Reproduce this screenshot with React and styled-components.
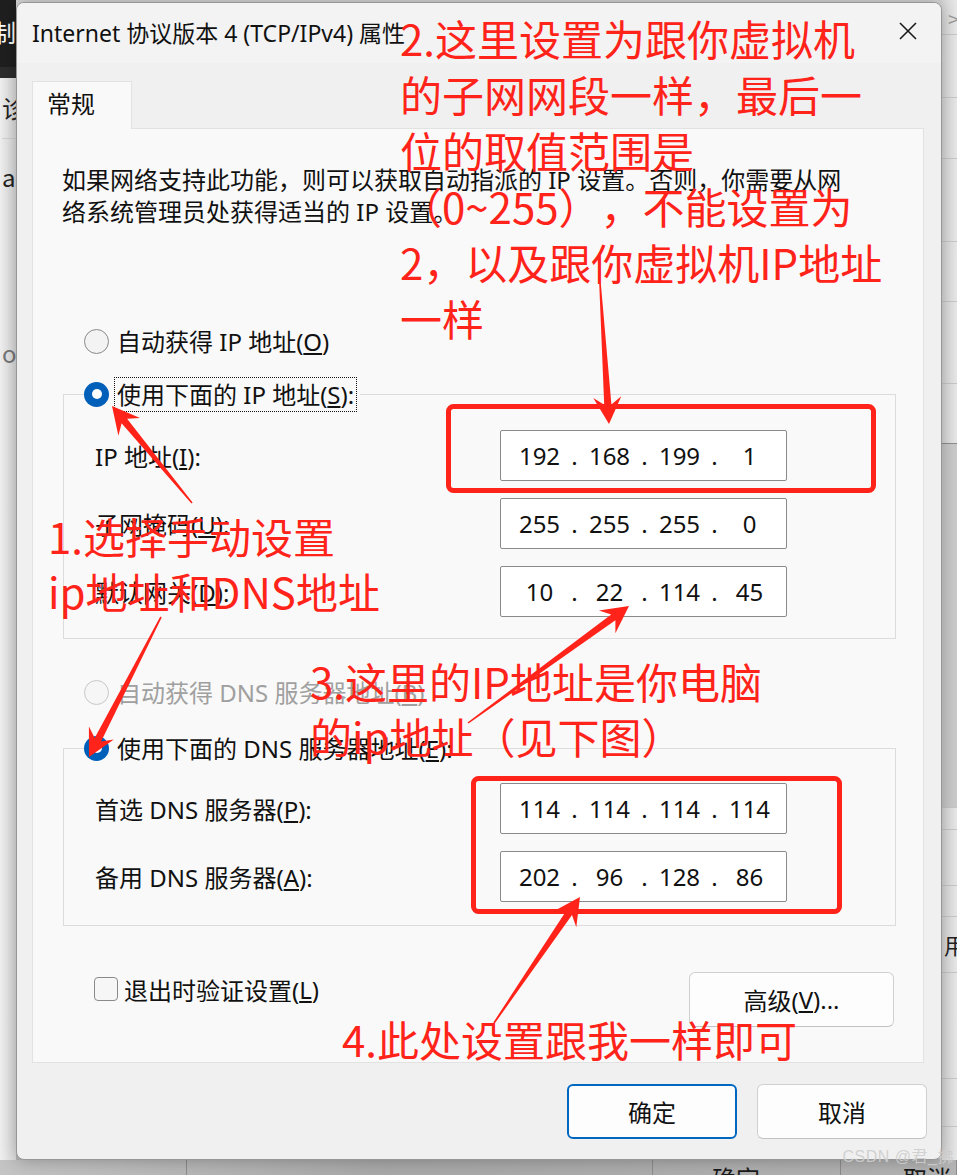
import React from 'react';
import styled, { createGlobalStyle } from 'styled-components';

const GlobalStyle = createGlobalStyle`
  html, body {
    margin: 0;
    padding: 0;
    background: #c9c9c9;
  }
  body {
    font-family: "Noto Sans", "Noto Sans CJK SC", sans-serif;
    text-spacing-trim: space-all;
  }
`;

const RED = '#ff2319';

const Desktop = styled.div`
  position: relative;
  width: 957px;
  height: 1175px;
  overflow: hidden;
  background: linear-gradient(to bottom, #d6d6d6, #b4b4b4);
  padding: 2px 0 0 16px;
  box-sizing: border-box;
`;

/* windows peeking out behind the dialog */
const LeftPeek = styled.div`
  position: absolute;
  left: 0;
  top: 0;
  width: 16px;
  height: 1175px;
  display: flex;
  flex-direction: column;
  overflow: hidden;
  font-family: "Noto Sans CJK SC", sans-serif;
`;

const PeekHeader = styled.div`
  height: 63px;
  background: #1f1f1f;
  border-bottom: 11px solid #2c2c2c;
  color: #fff;
  font-size: 24px;
  display: flex;
  justify-content: flex-end;
  align-items: center;
  padding-bottom: 4px;
  box-sizing: content-box;
`;

const PeekBody = styled.div`
  flex: 1;
  background: linear-gradient(to right, #efefef, #dcdcdc);
  display: flex;
  flex-direction: column;
  align-items: flex-end;
`;

const PeekText = styled.div`
  font-size: ${({ $size }) => $size || 24}px;
  line-height: 32px;
  color: ${({ $muted }) => ($muted ? '#777' : '#222')};
  margin-top: ${({ $top }) => $top}px;
  margin-right: -2px;
  white-space: nowrap;
  border-bottom: ${({ $line }) => ($line ? '1px solid #d2d2d2' : 'none')};
  padding-bottom: ${({ $line }) => ($line ? 14 : 0)}px;
  width: 100%;
  text-align: right;
`;

const RightPeek = styled.div`
  position: absolute;
  right: 0;
  top: 0;
  width: 15px;
  height: 1175px;
  display: flex;
  flex-direction: column;
  background: linear-gradient(to right, #dadada, #e8e8e8);
  font-family: "Noto Sans CJK SC", sans-serif;
`;

const RightCell = styled.div`
  height: ${({ $h }) => $h}px;
  flex: none;
  border-bottom: 1px solid ${({ $dark }) => ($dark ? '#8e8e8e' : '#c8c8c8')};
  background: ${({ $shade }) => ($shade ? '#cbcbcb' : 'transparent')};
  color: #222;
  font-size: 22px;
  line-height: ${({ $h }) => $h}px;
  overflow: hidden;
  white-space: nowrap;
  padding-left: 2px;
`;

const Chevron = styled.span`
  color: #9a9a9a;
  font-size: 20px;
  margin-left: 4px;
`;

const BottomPeek = styled.div`
  position: absolute;
  left: 0;
  right: 0;
  bottom: 0;
  height: 15px;
  display: flex;
  background: linear-gradient(to right, #c4c4c4, #a9a9a9 40%, #b3b3b3);
  font-family: "Noto Sans CJK SC", sans-serif;
`;

const BottomCell = styled.div`
  width: ${({ $w }) => $w}px;
  flex: none;
  border-right: 1px solid #8c8c8c;
  font-size: 24px;
  line-height: 24px;
  color: #1a1a1a;
  padding-top: 6px;
  padding-left: ${({ $pad }) => $pad || 0}px;
  overflow: hidden;
  white-space: nowrap;
  box-sizing: border-box;
`;

const Watermark = styled.div`
  position: absolute;
  right: 3px;
  bottom: 8px;
  font-family: "Liberation Sans", "Noto Sans CJK SC", sans-serif;
  font-size: 16px;
  color: rgba(205, 205, 205, 0.9);
  letter-spacing: 0.5px;
  white-space: nowrap;
  z-index: 3;
`;

/* dialog */
const Dialog = styled.div`
  position: relative;
  z-index: 1;
  width: 926px;
  height: 1158px;
  box-sizing: border-box;
  border: 1px solid #969696;
  border-radius: 8px;
  background: #f0f0f0;
  display: flex;
  flex-direction: column;
  overflow: hidden;
  box-shadow: 0 0 18px rgba(0, 0, 0, 0.28);
`;

const TitleBar = styled.div`
  height: 60px;
  flex: none;
  background: #f3f3f3;
  display: flex;
  align-items: center;
  justify-content: space-between;
  padding-left: 15px;
`;

const Title = styled.div`
  font-size: 23px;
  color: #111;
  white-space: nowrap;
  margin-top: -3px;
`;

const CloseButton = styled.div`
  width: 66px;
  height: 60px;
  display: flex;
  align-items: center;
  justify-content: center;
  margin-top: -5px;
`;

const Body = styled.div`
  flex: 1;
  display: flex;
  flex-direction: column;
  padding: 18px 17px 0 15px;
`;

const Tabs = styled.div`
  display: flex;
`;

const Tab = styled.div`
  position: relative;
  z-index: 1;
  width: 100px;
  height: 48px;
  box-sizing: border-box;
  margin-bottom: -1px;
  border: 1px solid #e2e2e2;
  border-bottom: none;
  background: #f9f9f9;
  font-size: 24px;
  color: #111;
  padding: 4px 0 0 14px;
  line-height: 36px;
`;

const Page = styled.div`
  height: 935px;
  box-sizing: border-box;
  border: 1px solid #e2e2e2;
  background: #f9f9f9;
  padding: 35px 0 0 29px;
  display: flex;
  flex-direction: column;
  align-items: flex-start;
`;

const Description = styled.p`
  margin: 0;
  font-size: 24px;
  line-height: 32px;
  color: #111;
  white-space: nowrap;
`;

const RadioRow = styled.div`
  display: flex;
  align-items: center;
  height: 36px;
  margin-top: ${({ $top }) => $top || 0}px;
  margin-left: ${({ $left }) => $left ?? 22}px;
  color: ${({ $disabled }) => ($disabled ? '#a0a0a0' : '#111')};
  font-size: 24px;
  white-space: nowrap;
`;

const Radio = styled.span`
  width: 25px;
  height: 25px;
  flex: none;
  box-sizing: border-box;
  border-radius: 50%;
  margin-right: 5px;
  display: flex;
  align-items: center;
  justify-content: center;
  background: ${({ $checked, $disabled }) =>
    $checked ? '#005fb8' : $disabled ? '#f6f6f6' : '#f3f3f3'};
  border: ${({ $checked, $disabled }) =>
    $checked ? 'none' : `1.5px solid ${$disabled ? '#c8c8c8' : '#8a8a8a'}`};

  &::after {
    content: '';
    display: ${({ $checked }) => ($checked ? 'block' : 'none')};
    width: 10px;
    height: 10px;
    border-radius: 50%;
    background: #fff;
  }
`;

const RadioLabel = styled.span`
  height: 35px;
  line-height: 33px;
  padding: 0 2px;
  box-sizing: border-box;
  border: 1px ${({ $focus }) => ($focus ? 'dotted #111' : 'solid transparent')};
`;

const Group = styled.fieldset`
  margin: ${({ $top }) => $top}px 0 0 1px;
  width: 833px;
  box-sizing: border-box;
  border: 1px solid #dcdcdc;
  padding: ${({ $pt }) => $pt}px 0 ${({ $pb }) => $pb}px 0;
  min-width: 0;
`;

const Legend = styled.legend`
  padding: 0 3px 0 0;
  margin-left: 20px;
`;

const FieldGrid = styled.div`
  display: grid;
  grid-template-columns: 405px 287px;
  grid-auto-rows: 51px;
  row-gap: 17px;
  align-items: center;
  margin-left: 31px;
`;

const FieldLabel = styled.span`
  font-size: 24px;
  color: #111;
  white-space: nowrap;
`;

const IpBox = styled.div`
  height: 51px;
  box-sizing: border-box;
  border: 1px solid #8a8a8a;
  border-radius: 2px;
  background: #fff;
  display: grid;
  grid-template-columns: 55px 15px 55px 15px 55px 15px 55px;
  align-items: center;
  padding-left: 11px;
  font-size: 24px;
  color: #111;
`;

const Octet = styled.span`
  text-align: center;
`;

const Dot = styled.span`
  text-align: center;
`;

const Footer = styled.div`
  width: 833px;
  margin: 46px 0 0 1px;
  display: flex;
  justify-content: space-between;
  align-items: flex-start;
`;

const CheckRow = styled.label`
  display: flex;
  align-items: center;
  margin: 3px 0 0 31px;
  font-size: 24px;
  color: #111;
  height: 28px;
`;

const CheckBox = styled.span`
  width: 24px;
  height: 24px;
  box-sizing: border-box;
  border: 1.5px solid #8a8a8a;
  border-radius: 4px;
  background: #f6f6f6;
  margin-right: 6px;
`;

const Button = styled.div`
  width: ${({ $w }) => $w || 170}px;
  height: 55px;
  box-sizing: border-box;
  border-radius: 6px;
  background: #fdfdfd;
  border: ${({ $primary }) => ($primary ? '2px solid #0067c0' : '1.5px solid #d0d0d0')};
  border-bottom-color: ${({ $primary }) => ($primary ? '#0067c0' : '#c2c2c2')};
  display: flex;
  align-items: center;
  justify-content: center;
  font-size: 24px;
  color: #111;
  margin-right: ${({ $mr }) => $mr || 0}px;
`;

const ButtonBar = styled.div`
  display: flex;
  justify-content: flex-end;
  gap: 20px;
  margin: 21px -3px 0 0;
`;

/* red annotations drawn over the screenshot */
const Overlay = styled.svg`
  position: absolute;
  left: 0;
  top: 0;
  z-index: 2;
  pointer-events: none;
`;

const Note = styled.div`
  position: absolute;
  z-index: 2;
  left: ${({ $x }) => $x}px;
  top: ${({ $y }) => $y}px;
  font-family: "Noto Sans CJK SC", sans-serif;
  font-size: 42px;
  line-height: ${({ $lh }) => $lh || 55}px;
  color: ${RED};
  white-space: nowrap;
  text-spacing-trim: space-all;
  pointer-events: none;
`;

const arrowPoints = ([x1, y1], [x2, y2], head = 27, wing = 14, neck = 3.6, tail = 0.8) => {
  const len = Math.hypot(x2 - x1, y2 - y1);
  const ux = (x2 - x1) / len;
  const uy = (y2 - y1) / len;
  const nx = -uy;
  const ny = ux;
  const bx = x2 - ux * head;
  const by = y2 - uy * head;
  const kx = x2 - ux * head * 0.72;
  const ky = y2 - uy * head * 0.72;
  const p = (x, y) => `${x.toFixed(1)},${y.toFixed(1)}`;
  return [
    p(x1 + nx * tail, y1 + ny * tail),
    p(kx + nx * neck, ky + ny * neck),
    p(bx + nx * wing, by + ny * wing),
    p(x2, y2),
    p(bx - nx * wing, by - ny * wing),
    p(kx - nx * neck, ky - ny * neck),
    p(x1 - nx * tail, y1 - ny * tail),
  ].join(' ');
};

const arrows = [
  [[600, 283], [609, 424]],
  [[192, 503], [112, 406]],
  [[161, 617], [89, 757]],
  [[468, 723], [629, 606]],
  [[494, 1023], [580, 897]],
];

const boxes = [
  { x: 448.5, y: 406.5, w: 425, h: 84 },
  { x: 473.5, y: 778.5, w: 366, h: 133 },
];

const ipRows = [
  { label: '地址', key: 'I', prefix: 'IP ', value: ['192', '168', '199', '1'] },
  { label: '子网掩码', key: 'U', value: ['255', '255', '255', '0'] },
  { label: '默认网关', key: 'D', value: ['10', '22', '114', '45'] },
];

const dnsRows = [
  { label: '首选 DNS 服务器', key: 'P', value: ['114', '114', '114', '114'] },
  { label: '备用 DNS 服务器', key: 'A', value: ['202', '96', '128', '86'] },
];

const IpField = ({ value }) => (
  <IpBox>
    {value.map((part, i) => (
      <React.Fragment key={i}>
        {i > 0 && <Dot>.</Dot>}
        <Octet>{part}</Octet>
      </React.Fragment>
    ))}
  </IpBox>
);

const Rows = ({ rows }) => (
  <FieldGrid>
    {rows.map((r) => (
      <React.Fragment key={r.key}>
        <FieldLabel>
          {r.prefix}
          {r.label}(<u>{r.key}</u>):
        </FieldLabel>
        <IpField value={r.value} />
      </React.Fragment>
    ))}
  </FieldGrid>
);

const CloseIcon = () => (
  <svg width="20" height="20" viewBox="0 0 20 20">
    <path d="M2 2 L18 18 M18 2 L2 18" stroke="#1a1a1a" strokeWidth="1.6" fill="none" />
  </svg>
);

const App = () => (
  <>
    <GlobalStyle />
    <Desktop>
      <LeftPeek>
        <PeekHeader>制</PeekHeader>
        <PeekBody>
          <PeekText $top={14} $line>诊</PeekText>
          <PeekText $top={22}>ap</PeekText>
          <PeekText $top={144} $muted>ob</PeekText>
        </PeekBody>
      </LeftPeek>

      <RightPeek>
        <RightCell $h={34}>
          <Chevron>&gt;</Chevron>
        </RightCell>
        <RightCell $h={62} />
        <RightCell $h={60} />
        <RightCell $h={82} />
        <RightCell $h={59} />
        <RightCell $h={81} />
        <RightCell $h={59} $dark />
        <RightCell $h={363} $shade />
        <RightCell $h={21} />
        <RightCell $h={55} />
        <RightCell $h={30} />
        <RightCell $h={55}>用</RightCell>
        <RightCell $h={105} />
        <RightCell $h={47} />
      </RightPeek>

      <BottomPeek>
        <BottomCell $w={187} />
        <BottomCell $w={466} />
        <BottomCell $w={188} $pad={59}>确定</BottomCell>
        <BottomCell $w={116} $pad={62}>取消</BottomCell>
      </BottomPeek>
      <Watermark>CSDN @君_拂</Watermark>

      <Dialog>
        <TitleBar>
          <Title>Internet 协议版本 4 (TCP/IPv4) 属性</Title>
          <CloseButton>
            <CloseIcon />
          </CloseButton>
        </TitleBar>

        <Body>
          <Tabs>
            <Tab>常规</Tab>
          </Tabs>
          <Page>
            <Description>
              如果网络支持此功能，则可以获取自动指派的 IP 设置。否则，你需要从网
              <br />
              络系统管理员处获得适当的 IP 设置。
            </Description>

            <RadioRow $top={95}>
              <Radio />
              <RadioLabel>
                自动获得 IP 地址(<u>O</u>)
              </RadioLabel>
            </RadioRow>

            <Group $top={17} $pt={18} $pb={21}>
              <Legend>
                <RadioRow $left={0}>
                  <Radio $checked />
                  <RadioLabel $focus>
                    使用下面的 IP 地址(<u>S</u>):
                  </RadioLabel>
                </RadioRow>
              </Legend>
              <Rows rows={ipRows} />
            </Group>

            <RadioRow $top={35} $disabled>
              <Radio $disabled />
              <RadioLabel>
                自动获得 DNS 服务器地址(<u>B</u>)
              </RadioLabel>
            </RadioRow>

            <Group $top={20} $pt={17} $pb={23}>
              <Legend>
                <RadioRow $left={0}>
                  <Radio $checked />
                  <RadioLabel>
                    使用下面的 DNS 服务器地址(<u>E</u>):
                  </RadioLabel>
                </RadioRow>
              </Legend>
              <Rows rows={dnsRows} />
            </Group>

            <Footer>
              <CheckRow>
                <CheckBox />
                退出时验证设置(<u>L</u>)
              </CheckRow>
              <Button $w={205} $mr={2}>
                高级(<u>V</u>)...
              </Button>
            </Footer>
          </Page>

          <ButtonBar>
            <Button $primary>确定</Button>
            <Button>取消</Button>
          </ButtonBar>
        </Body>
      </Dialog>

      <Overlay width="957" height="1175" viewBox="0 0 957 1175">
        {boxes.map((b, i) => (
          <rect key={i} x={b.x} y={b.y} width={b.w} height={b.h} rx="5"
            fill="none" stroke={RED} strokeWidth="5" />
        ))}
        {arrows.map(([from, to], i) => (
          <polygon key={i} points={arrowPoints(from, to)} fill={RED} />
        ))}
      </Overlay>

      <Note $x={400} $y={10} $lh={56}>
        2.这里设置为跟你虚拟机<br />
        的子网网段一样，最后一<br />
        位的取值范围是<br />
        （0~255），不能设置为<br />
        2，以及跟你虚拟机IP地址<br />
        一样
      </Note>
      <Note $x={48} $y={508}>
        1.选择手动设置<br />
        ip地址和DNS地址
      </Note>
      <Note $x={310} $y={653}>
        3.这里的IP地址是你电脑<br />
        的ip地址（见下图）
      </Note>
      <Note $x={342} $y={1011}>4.此处设置跟我一样即可</Note>
    </Desktop>
  </>
);

export default App;
